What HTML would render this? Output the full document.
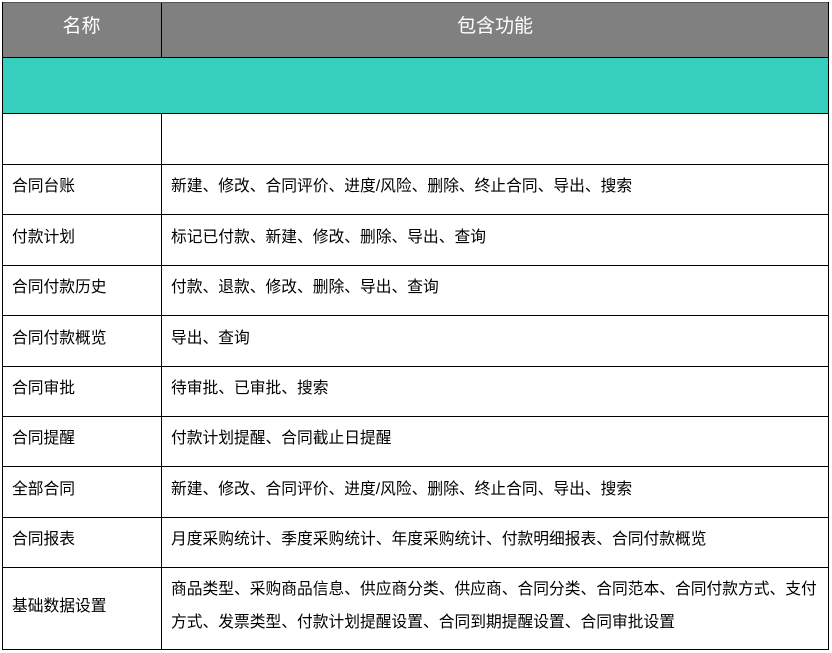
<!DOCTYPE html><html><head><meta charset="utf-8"><style>
body{margin:0;width:832px;height:653px;background:#fff;position:relative;overflow:hidden;font-family:"Liberation Sans","Noto Sans CJK SC",sans-serif;color:#000}
.h{position:absolute;background:#000;height:1px}
.v{position:absolute;background:#000;width:1px}
.t{position:absolute;font-size:15.75px;line-height:20px;white-space:nowrap}
</style></head><body>
<div style="position:absolute;left:2px;top:3px;width:827px;height:55px;background:#808080"></div>
<div style="position:absolute;left:2px;top:58px;width:827px;height:55px;background:#36cebc"></div>
<div class="t" style="left:2px;width:159px;top:16px;text-align:center;color:#fff;font-size:19px;line-height:22px">名称</div>
<div class="t" style="left:162px;width:666px;top:16px;text-align:center;color:#fff;font-size:19px;line-height:22px">包含功能</div>
<div class="h" style="left:2px;top:2px;width:827px;background:#555"></div>
<div class="h" style="left:2px;top:57px;width:827px"></div>
<div class="h" style="left:2px;top:113px;width:827px"></div>
<div class="h" style="left:2px;top:164px;width:827px"></div>
<div class="h" style="left:2px;top:214px;width:827px"></div>
<div class="h" style="left:2px;top:265px;width:827px"></div>
<div class="h" style="left:2px;top:315px;width:827px"></div>
<div class="h" style="left:2px;top:366px;width:827px"></div>
<div class="h" style="left:2px;top:416px;width:827px"></div>
<div class="h" style="left:2px;top:466px;width:827px"></div>
<div class="h" style="left:2px;top:517px;width:827px"></div>
<div class="h" style="left:2px;top:567px;width:827px"></div>
<div class="h" style="left:2px;top:649px;width:827px"></div>
<div class="v" style="left:2px;top:2px;height:648px"></div>
<div class="v" style="left:161px;top:3px;height:55px"></div>
<div class="v" style="left:161px;top:113px;height:537px"></div>
<div class="v" style="left:828px;top:2px;height:648px"></div>
<div class="t" style="left:12px;top:177px">合同台账</div><div class="t" style="left:171px;top:177px">新建、修改、合同评价、进度/风险、删除、终止合同、导出、搜索</div>
<div class="t" style="left:12px;top:228px">付款计划</div><div class="t" style="left:171px;top:228px">标记已付款、新建、修改、删除、导出、查询</div>
<div class="t" style="left:12px;top:278px">合同付款历史</div><div class="t" style="left:171px;top:278px">付款、退款、修改、删除、导出、查询</div>
<div class="t" style="left:12px;top:329px">合同付款概览</div><div class="t" style="left:171px;top:329px">导出、查询</div>
<div class="t" style="left:12px;top:379px">合同审批</div><div class="t" style="left:171px;top:379px">待审批、已审批、搜索</div>
<div class="t" style="left:12px;top:429px">合同提醒</div><div class="t" style="left:171px;top:429px">付款计划提醒、合同截止日提醒</div>
<div class="t" style="left:12px;top:480px">全部合同</div><div class="t" style="left:171px;top:480px">新建、修改、合同评价、进度/风险、删除、终止合同、导出、搜索</div>
<div class="t" style="left:12px;top:530px">合同报表</div><div class="t" style="left:171px;top:530px">月度采购统计、季度采购统计、年度采购统计、付款明细报表、合同付款概览</div>
<div class="t" style="left:12px;top:597px">基础数据设置</div>
<div class="t" style="left:171px;top:580px">商品类型、采购商品信息、供应商分类、供应商、合同分类、合同范本、合同付款方式、支付</div>
<div class="t" style="left:171px;top:613px">方式、发票类型、付款计划提醒设置、合同到期提醒设置、合同审批设置</div>
</body></html>
